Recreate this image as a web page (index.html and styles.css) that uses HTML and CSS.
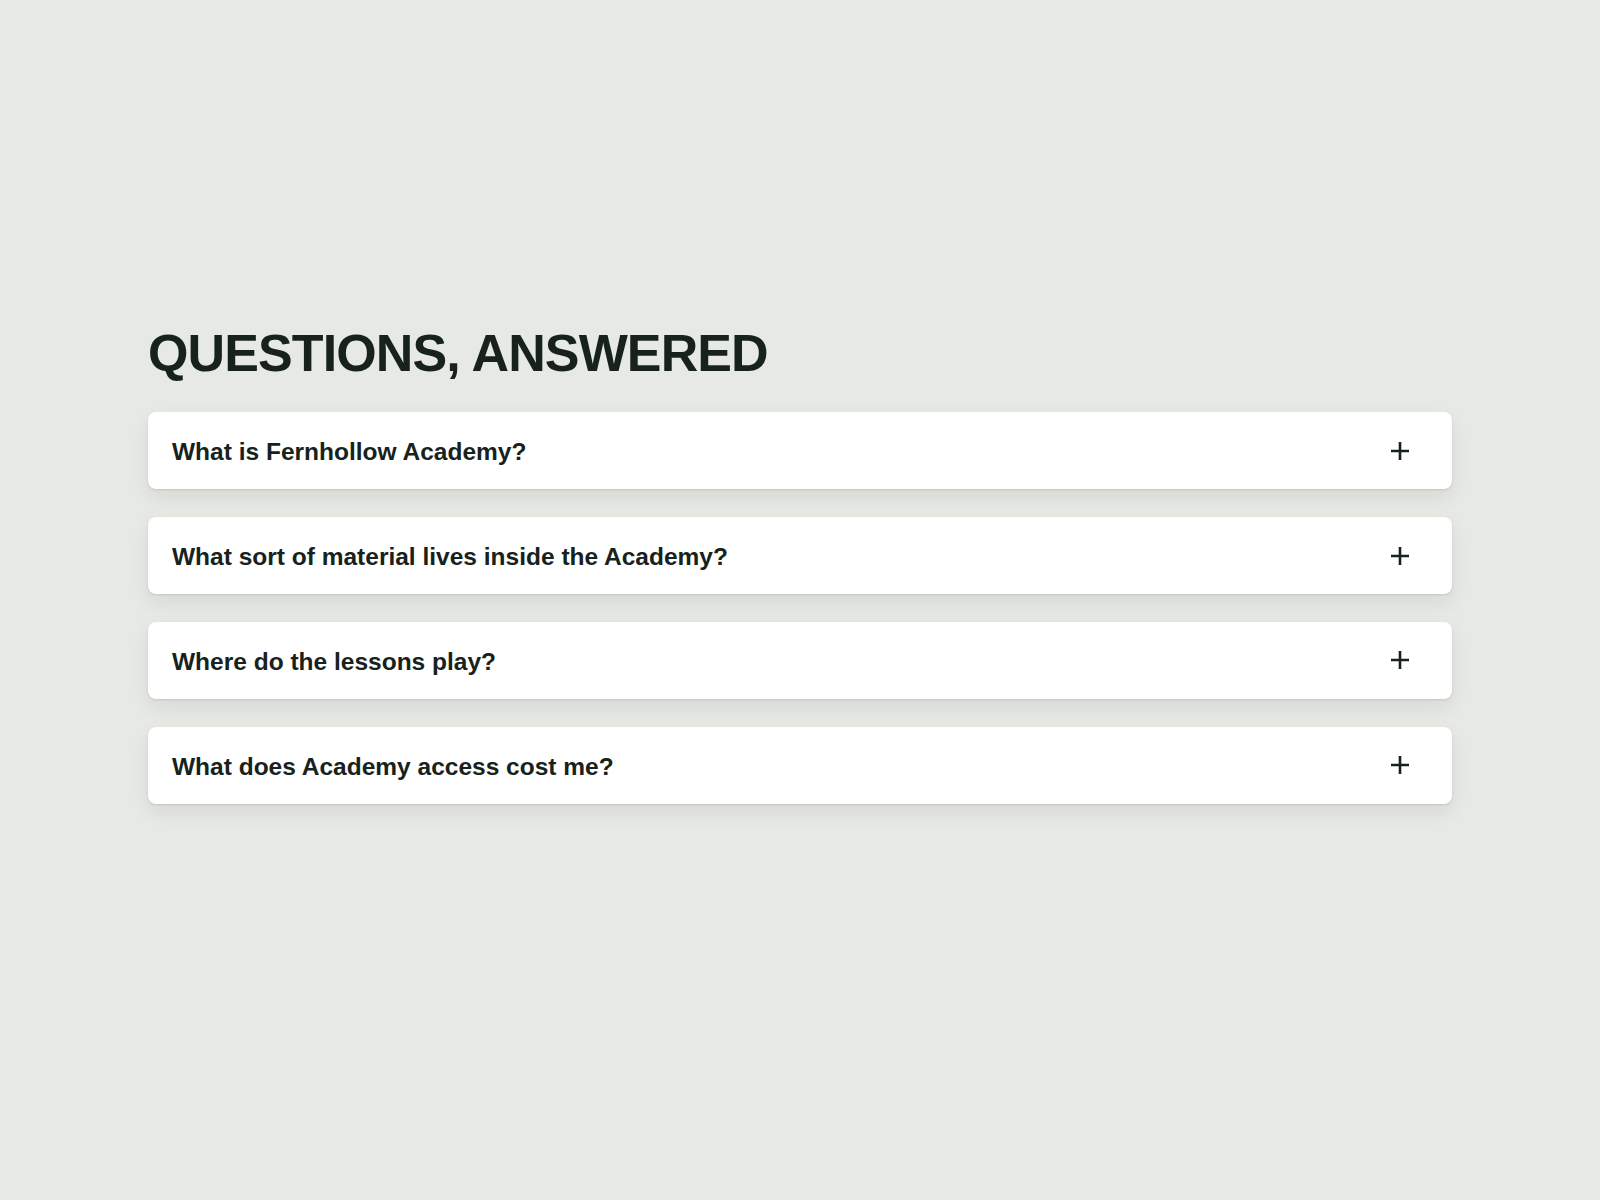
FILE: index.html
```html
<!DOCTYPE html>
<html lang="en">
<head>
<meta charset="utf-8">
<title>Questions, answered</title>
<link rel="stylesheet" href="styles.css">
</head>
<body>
<main class="faq">
  <h1 class="faq-title">QUESTIONS, ANSWERED</h1>
  <div class="faq-list">
    <div class="faq-item">
      <span class="faq-q">What is Fernhollow Academy?</span>
      <svg class="faq-icon" viewBox="0 0 20 20" width="20" height="20" aria-hidden="true"><path d="M10 1v18M1 10h18" stroke="currentColor" stroke-width="2.6" fill="none"/></svg>
    </div>
    <div class="faq-item">
      <span class="faq-q">What sort of material lives inside the Academy?</span>
      <svg class="faq-icon" viewBox="0 0 20 20" width="20" height="20" aria-hidden="true"><path d="M10 1v18M1 10h18" stroke="currentColor" stroke-width="2.6" fill="none"/></svg>
    </div>
    <div class="faq-item">
      <span class="faq-q">Where do the lessons play?</span>
      <svg class="faq-icon" viewBox="0 0 20 20" width="20" height="20" aria-hidden="true"><path d="M10 1v18M1 10h18" stroke="currentColor" stroke-width="2.6" fill="none"/></svg>
    </div>
    <div class="faq-item">
      <span class="faq-q">What does Academy access cost me?</span>
      <svg class="faq-icon" viewBox="0 0 20 20" width="20" height="20" aria-hidden="true"><path d="M10 1v18M1 10h18" stroke="currentColor" stroke-width="2.6" fill="none"/></svg>
    </div>
  </div>
</main>
</body>
</html>
```

FILE: styles.css
```css
html, body {
  margin: 0;
  padding: 0;
}
body {
  background: #e7e9e4;
  color: #17221c;
  font-family: "Liberation Sans", Arial, sans-serif;
  min-height: 1200px;
}
.faq {
  padding: 322px 148px 0;
}
.faq-title {
  margin: 0 0 28px;
  font-size: 52px;
  line-height: 1.2;
  font-weight: 700;
  letter-spacing: -0.017em;
}
.faq-list {
  display: flex;
  flex-direction: column;
  gap: 28px;
}
.faq-item {
  display: flex;
  align-items: center;
  justify-content: space-between;
  background: #ffffff;
  border-radius: 8px;
  padding: 26px 42px 22px 24px;
  box-shadow: 0 1px 2px rgba(20, 30, 25, 0.12), 0 8px 20px rgba(20, 30, 25, 0.08);
}
.faq-q {
  font-size: 24.5px;
  line-height: 28.8px;
  font-weight: 700;
}
.faq-icon {
  display: block;
  color: #17221c;
  margin-top: -4px;
}
```
